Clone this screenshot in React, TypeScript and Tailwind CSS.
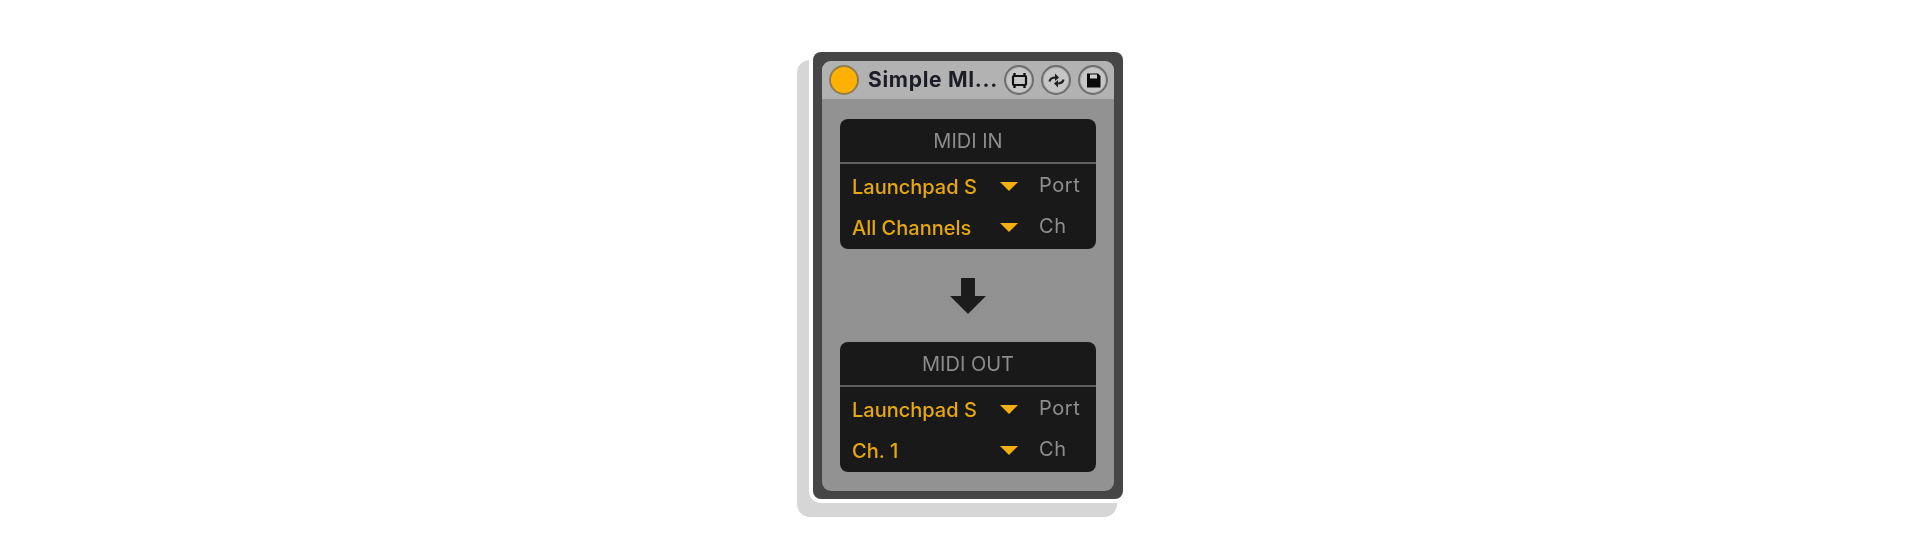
const font = "[font-family:Inter,'Noto_Sans',sans-serif]";

function Round({ children }: { children: React.ReactNode }) {
  return (
    <div className="w-[30px] h-[30px] rounded-full border-2 border-[#6e6e6e] bg-[#b4b4b4] flex items-center justify-center">
      <div className="w-[24px] h-[24px] rounded-full bg-[#c6c6c6] flex items-center justify-center">
        {children}
      </div>
    </div>
  );
}

function Row({ value, label }: { value: string; label: string }) {
  return (
    <div className="h-[41px] flex items-center pl-[12px]">
      <span className="w-[148px] text-[20px] leading-none text-[#e6a80e] font-medium whitespace-nowrap">{value}</span>
      <svg width="18" height="9" viewBox="0 0 18 9" className="shrink-0">
        <path d="M0 0H18L9 9Z" fill="#f5b010" />
      </svg>
      <span className="ml-[21px] text-[20px] tracking-[0.6px] leading-none text-[#8e8e8e] whitespace-nowrap -mt-[4px]">{label}</span>
    </div>
  );
}

function Panel({ title }: { title: string; }) {
  const out = title === "MIDI OUT";
  return (
    <div className="w-[256px] h-[130px] bg-[#191919] rounded-[8px] overflow-hidden">
      <div className="h-[45px] border-b-2 border-[#5f5f5f] flex items-center justify-center text-[20px] text-[#8c8c8c]">
        {title}
      </div>
      <div className="pt-[2px]">
        <Row value="Launchpad S" label="Port" />
        <Row value={out ? "Ch. 1" : "All Channels"} label="Ch" />
      </div>
    </div>
  );
}

export default function App() {
  return (
    <div className={`w-[1920px] h-[551px] bg-white flex justify-center pl-[16px] pt-[52px] ${font}`}>
      <div className="blur-[0.7px] w-[310px] h-[447px] bg-[#464646] rounded-[8px] p-[9px] shadow-[0_0_0_4px_#fff,-11px_13px_0_5px_#d6d6d6]">
        <div className="h-[430px] rounded-[9px] bg-[#929292] overflow-hidden flex flex-col">
          <div className="h-[38px] shrink-0 bg-[#b2b2b2] flex items-center pl-[7px] pr-[6px]">
            <div className="w-[30px] h-[30px] rounded-full bg-[#ffb000] border-2 border-[#8d8050] shrink-0" />
            <span className="ml-[9px] text-[21px] tracking-[0.7px] font-bold text-[#1d1d28] whitespace-nowrap">Simple MI...</span>
            <div className="ml-auto flex gap-[7px]">
              <Round>
                <svg width="19" height="19" viewBox="0 0 19 19">
                  <rect x="3" y="5" width="13" height="9" rx="1" fill="none" stroke="#111" strokeWidth="2.2" />
                  <path d="M4.5 2V5M14.5 2V5M4.5 14V17M14.5 14V17" stroke="#111" strokeWidth="2.4" />
                </svg>
              </Round>
              <Round>
                <svg width="19" height="19" viewBox="0 0 19 19">
                  <path d="M2.5 10.5C3 8 5 6.5 8.5 6.5" fill="none" stroke="#222" strokeWidth="2.2" />
                  <path d="M8 2.5L12 6.5L8 10Z" fill="#222" />
                  <path d="M16.5 8.5C16 11 14 12.5 10.5 12.5" fill="none" stroke="#222" strokeWidth="2.2" />
                  <path d="M11 16.5L7 12.5L11 9Z" fill="#222" />
                </svg>
              </Round>
              <Round>
                <svg width="19" height="19" viewBox="0 0 19 19">
                  <path d="M3 2.5H14L16.5 5V16.5H3Z" fill="#0a0a0a" />
                  <rect x="6" y="3.5" width="7" height="4" fill="#cfcfcf" />
                </svg>
              </Round>
            </div>
          </div>
          <div className="flex-1 flex flex-col items-center pt-[20px] pb-[19px]">
            <Panel title="MIDI IN" />
            <div className="flex-1 flex items-center justify-center">
              <svg width="38" height="36" viewBox="0 0 38 36">
                <path d="M12 0H26V18H37L19 36L1 18H12Z" fill="#1c1c1c" />
              </svg>
            </div>
            <Panel title="MIDI OUT" />
          </div>
        </div>
      </div>
    </div>
  );
}
